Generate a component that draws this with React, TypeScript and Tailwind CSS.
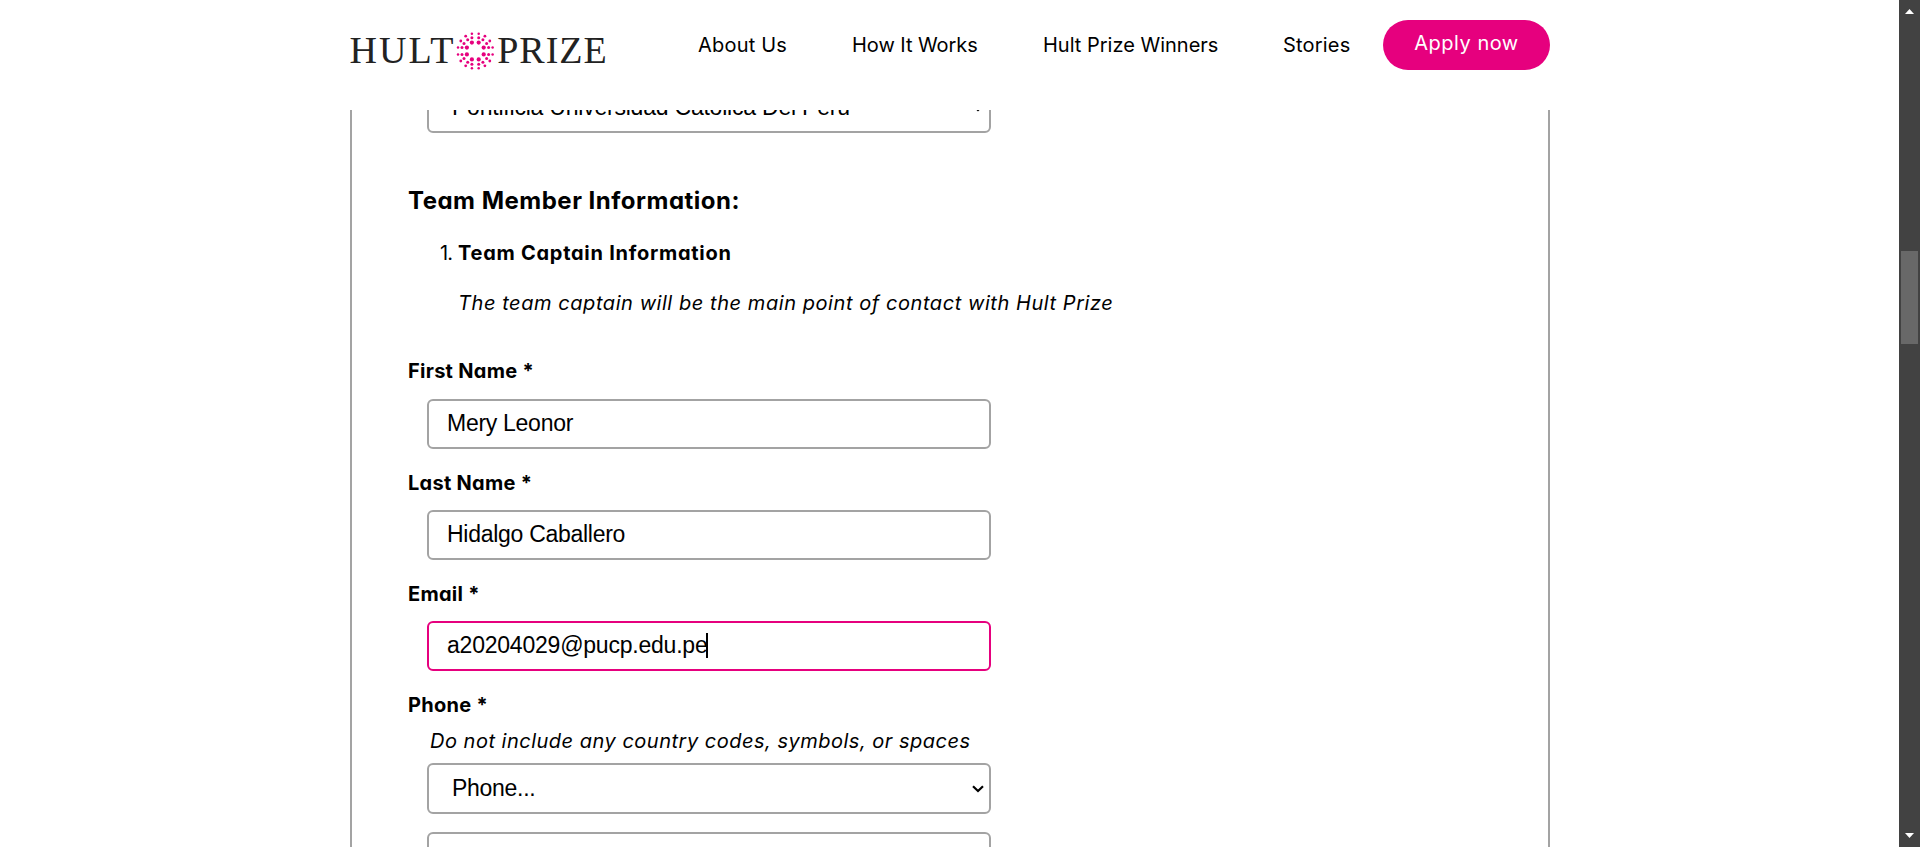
import type { ReactNode } from "react";

const DOTS: [number, number, number][] = [
  [3.4, 8.4, 2.1],
  [8.4, 3.4, 2.1],
  [3.4, 13.3, 1.5],
  [13.3, 3.4, 1.5],
  [3.4, 17.3, 1.25],
  [17.3, 3.4, 1.25],
  [7.6, 11.3, 1.5],
  [11.3, 7.6, 1.5],
  [9.6, 14.8, 1.4],
  [14.5, 10, 1.4],
];

const SIGNS = [
  [1, 1],
  [1, -1],
  [-1, 1],
  [-1, -1],
];

function Logo() {
  return (
    <svg width="258" height="44" viewBox="0 0 258 44" className="block" aria-label="Hult Prize">
      <g fill="#222" fontFamily="'Liberation Serif', serif" fontSize="38">
        <text x="-0.5" y="35.4" textLength="104" lengthAdjust="spacing">HULT</text>
        <text x="147.2" y="35.4" textLength="109.5" lengthAdjust="spacing">PRIZE</text>
      </g>
      <g fill="#e6007e" transform="translate(125.3 23)">
        {SIGNS.map(([sx, sy]) =>
          DOTS.map(([x, y, r]) => (
            <circle key={`${sx}${sy}${x}${y}`} cx={sx * x} cy={sy * y} r={r} />
          ))
        )}
      </g>
    </svg>
  );
}

function Field({
  children,
  active,
  className = "",
}: {
  children?: ReactNode;
  active?: boolean;
  className?: string;
}) {
  return (
    <div
      className={`ml-[19px] flex w-[564px] shrink-0 items-center rounded-md border-2 font-['Liberation_Sans',Arial,sans-serif] text-[23px] leading-[25px] tracking-[-0.28px] ${
        active ? "border-[#e6007e]" : "border-[#a3a3a3]"
      } ${className}`}
    >
      {children}
    </div>
  );
}

function Chevron() {
  return (
    <svg width="12" height="8" viewBox="0 0 12 8" className="mr-[5px] ml-auto" fill="none" stroke="#000" strokeWidth="2.2">
      <path d="M1 1.2 L6 6 L11 1.2" />
    </svg>
  );
}

function Label({ children, className = "" }: { children: ReactNode; className?: string }) {
  return (
    <div className={`h-[30px] shrink-0 text-[20px] leading-[30px] font-bold tracking-[0.28px] ${className}`}>
      {children}
    </div>
  );
}

export default function App() {
  return (
    <div className="flex h-[847px] w-full overflow-hidden bg-white font-['Inter','Open_Sans',sans-serif] text-black [font-feature-settings:'cv11']">
      <div className="flex min-w-0 flex-1 flex-col pl-[350px]">
        <header className="flex h-[110px] w-[1200px] shrink-0 items-start text-[20px] leading-[30px] whitespace-nowrap">
          <div className="mt-[28px] w-[348px]">
            <Logo />
          </div>
          <nav className="flex flex-1 pt-[30px]">
            <a className="w-[154px] tracking-[0.2px]">About Us</a>
            <a className="w-[191px] tracking-[-0.05px]">How It Works</a>
            <a className="w-[240px]">Hult Prize Winners</a>
            <a className="tracking-[0.2px]">Stories</a>
          </nav>
          <button className="mt-[20px] h-[50px] w-[167px] rounded-full bg-[#e6007e] pb-[5px] tracking-[0.5px] text-white">
            Apply now
          </button>
        </header>

        <main className="flex min-h-0 w-[1200px] flex-1 flex-col overflow-hidden border-x-2 border-[#a3a3a3] pl-[56px] whitespace-nowrap">
          <Field className="-mt-[28px] h-[51px] pl-[23px]">
            <span className="tracking-[-0.22px]">Pontificia Universidad Catolica Del Peru</span>
            <Chevron />
          </Field>
          <h2 className="mt-[50px] h-[36px] text-[24px] leading-[36px] font-bold tracking-[0.5px]">
            Team Member Information:
          </h2>
          <div className="mt-[19px] flex h-[30px] text-[20px] leading-[30px]">
            <span className="w-[50px] pr-[6px] text-right tracking-[-1px]">1.</span>
            <b className="tracking-[0.73px]">Team Captain Information</b>
          </div>
          <p className="mt-[20px] ml-[50px] h-[30px] text-[20px] leading-[30px] tracking-[0.56px] italic">
            The team captain will be the main point of contact with Hult Prize
          </p>
          <Label className="mt-[38px]">First Name *</Label>
          <Field className="mt-[13px] h-[50px] pb-[2px] pl-[18px]">Mery Leonor</Field>
          <Label className="mt-[19px]">Last Name *</Label>
          <Field className="mt-[12px] h-[50px] pb-[2px] pl-[18px]">Hidalgo Caballero</Field>
          <Label className="mt-[19px]">Email *</Label>
          <Field active className="mt-[12px] h-[50px] pb-[2px] pl-[18px]">
            <span className="tracking-[-0.22px]">a20204029@pucp.edu.pe</span>
            <span className="-ml-px h-[25px] w-[2px] bg-black" />
          </Field>
          <Label className="mt-[19px]">Phone *</Label>
          <p className="mt-[6px] ml-[22px] h-[30px] text-[20px] leading-[30px] tracking-[0.5px] italic">
            Do not include any country codes, symbols, or spaces
          </p>
          <Field className="mt-[7px] h-[51px] pl-[23px]">
            Phone...
            <Chevron />
          </Field>
          <Field className="mt-[18px] h-[50px]" />
        </main>
      </div>

      <div className="flex w-[21px] shrink-0 flex-col items-center bg-[#424242]">
        <svg width="9" height="5" viewBox="0 0 9 5" className="mt-[9px]" fill="#fff">
          <path d="M4.5 0 L9 5 H0 Z" />
        </svg>
        <div className="mt-[237px] h-[93px] w-[17px] bg-[#686868]" />
        <svg width="9" height="5" viewBox="0 0 9 5" className="mt-auto mb-[9px]" fill="#fff">
          <path d="M0 0 H9 L4.5 5 Z" />
        </svg>
      </div>
    </div>
  );
}
